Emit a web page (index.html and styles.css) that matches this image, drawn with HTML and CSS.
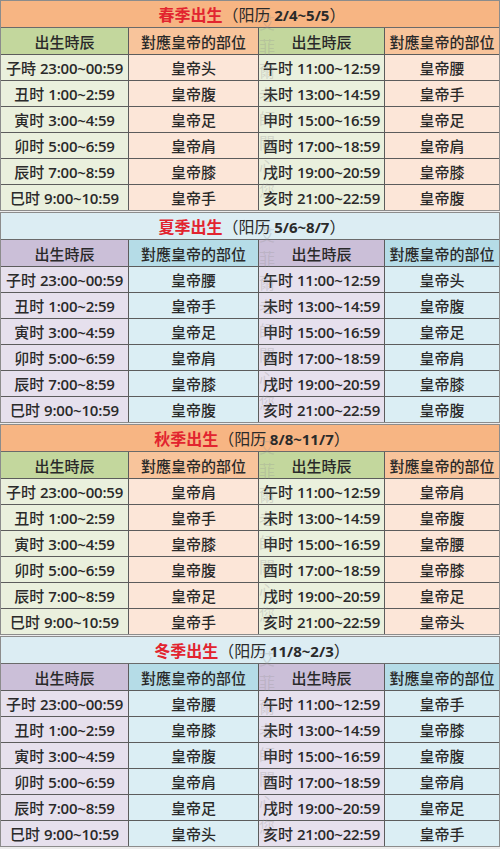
FILE: index.html
```html
<!DOCTYPE html>
<html lang="zh">
<head>
<meta charset="utf-8">
<link rel="stylesheet" href="styles.css">
</head>
<body>
<div class="page">

<section class="season warm">
  <div class="title"><span class="name">春季出生</span>（阳历 <b>2/4~5/5</b>）</div>
  <div class="grid">
    <div class="h1">出生時辰</div><div class="h2">對應皇帝的部位</div><div class="h1">出生時辰</div><div class="h2">對應皇帝的部位</div>
    <div class="c1">子時 <b>23:00~00:59</b></div><div class="c2">皇帝头</div><div class="c1">午时 <b>11:00~12:59</b></div><div class="c2">皇帝腰</div>
    <div class="c1">丑时 <b>1:00~2:59</b></div><div class="c2">皇帝腹</div><div class="c1">未时 <b>13:00~14:59</b></div><div class="c2">皇帝手</div>
    <div class="c1">寅时 <b>3:00~4:59</b></div><div class="c2">皇帝足</div><div class="c1">申时 <b>15:00~16:59</b></div><div class="c2">皇帝足</div>
    <div class="c1">卯时 <b>5:00~6:59</b></div><div class="c2">皇帝肩</div><div class="c1">酉时 <b>17:00~18:59</b></div><div class="c2">皇帝肩</div>
    <div class="c1">辰时 <b>7:00~8:59</b></div><div class="c2">皇帝膝</div><div class="c1">戌时 <b>19:00~20:59</b></div><div class="c2">皇帝膝</div>
    <div class="c1">巳时 <b>9:00~10:59</b></div><div class="c2">皇帝手</div><div class="c1">亥时 <b>21:00~22:59</b></div><div class="c2">皇帝腹</div>
  </div>
  <div class="mark">艾菲爾老師關心您</div>
</section>

<section class="season cool">
  <div class="title"><span class="name">夏季出生</span>（阳历 <b>5/6~8/7</b>）</div>
  <div class="grid">
    <div class="h1">出生時辰</div><div class="h2">對應皇帝的部位</div><div class="h1">出生時辰</div><div class="h2">對應皇帝的部位</div>
    <div class="c1">子时 <b>23:00~00:59</b></div><div class="c2">皇帝腰</div><div class="c1">午时 <b>11:00~12:59</b></div><div class="c2">皇帝头</div>
    <div class="c1">丑时 <b>1:00~2:59</b></div><div class="c2">皇帝手</div><div class="c1">未时 <b>13:00~14:59</b></div><div class="c2">皇帝腹</div>
    <div class="c1">寅时 <b>3:00~4:59</b></div><div class="c2">皇帝足</div><div class="c1">申时 <b>15:00~16:59</b></div><div class="c2">皇帝足</div>
    <div class="c1">卯时 <b>5:00~6:59</b></div><div class="c2">皇帝肩</div><div class="c1">酉时 <b>17:00~18:59</b></div><div class="c2">皇帝肩</div>
    <div class="c1">辰时 <b>7:00~8:59</b></div><div class="c2">皇帝膝</div><div class="c1">戌时 <b>19:00~20:59</b></div><div class="c2">皇帝膝</div>
    <div class="c1">巳时 <b>9:00~10:59</b></div><div class="c2">皇帝腹</div><div class="c1">亥时 <b>21:00~22:59</b></div><div class="c2">皇帝腹</div>
  </div>
  <div class="mark">艾菲爾老師關心您</div>
</section>

<section class="season warm">
  <div class="title"><span class="name">秋季出生</span>（阳历 <b>8/8~11/7</b>）</div>
  <div class="grid">
    <div class="h1">出生時辰</div><div class="h2">對應皇帝的部位</div><div class="h1">出生時辰</div><div class="h2">對應皇帝的部位</div>
    <div class="c1">子时 <b>23:00~00:59</b></div><div class="c2">皇帝肩</div><div class="c1">午时 <b>11:00~12:59</b></div><div class="c2">皇帝肩</div>
    <div class="c1">丑时 <b>1:00~2:59</b></div><div class="c2">皇帝手</div><div class="c1">未时 <b>13:00~14:59</b></div><div class="c2">皇帝腹</div>
    <div class="c1">寅时 <b>3:00~4:59</b></div><div class="c2">皇帝膝</div><div class="c1">申时 <b>15:00~16:59</b></div><div class="c2">皇帝腰</div>
    <div class="c1">卯时 <b>5:00~6:59</b></div><div class="c2">皇帝腹</div><div class="c1">酉时 <b>17:00~18:59</b></div><div class="c2">皇帝膝</div>
    <div class="c1">辰时 <b>7:00~8:59</b></div><div class="c2">皇帝足</div><div class="c1">戌时 <b>19:00~20:59</b></div><div class="c2">皇帝足</div>
    <div class="c1">巳时 <b>9:00~10:59</b></div><div class="c2">皇帝手</div><div class="c1">亥时 <b>21:00~22:59</b></div><div class="c2">皇帝头</div>
  </div>
  <div class="mark">艾菲爾老師關心您</div>
</section>

<section class="season cool">
  <div class="title"><span class="name">冬季出生</span>（阳历 <b>11/8~2/3</b>）</div>
  <div class="grid">
    <div class="h1">出生時辰</div><div class="h2">對應皇帝的部位</div><div class="h1">出生時辰</div><div class="h2">對應皇帝的部位</div>
    <div class="c1">子时 <b>23:00~00:59</b></div><div class="c2">皇帝腰</div><div class="c1">午时 <b>11:00~12:59</b></div><div class="c2">皇帝手</div>
    <div class="c1">丑时 <b>1:00~2:59</b></div><div class="c2">皇帝膝</div><div class="c1">未时 <b>13:00~14:59</b></div><div class="c2">皇帝膝</div>
    <div class="c1">寅时 <b>3:00~4:59</b></div><div class="c2">皇帝腹</div><div class="c1">申时 <b>15:00~16:59</b></div><div class="c2">皇帝腹</div>
    <div class="c1">卯时 <b>5:00~6:59</b></div><div class="c2">皇帝肩</div><div class="c1">酉时 <b>17:00~18:59</b></div><div class="c2">皇帝肩</div>
    <div class="c1">辰时 <b>7:00~8:59</b></div><div class="c2">皇帝足</div><div class="c1">戌时 <b>19:00~20:59</b></div><div class="c2">皇帝足</div>
    <div class="c1">巳时 <b>9:00~10:59</b></div><div class="c2">皇帝头</div><div class="c1">亥时 <b>21:00~22:59</b></div><div class="c2">皇帝手</div>
  </div>
  <div class="mark">艾菲爾老師關心您</div>
</section>

</div>
</body>
</html>
```

FILE: styles.css
```css
html, body {
  margin: 0;
  padding: 0;
  background: #ececec;
}
.page {
  width: 500px;
  font-family: "Noto Sans CJK SC", "Noto Sans", sans-serif;
  color: #2a2a2a;
}
.season {
  position: relative;
  border: 1px solid #8c8c8c;
  margin-bottom: 1px;
  overflow: hidden;
}
.title {
  height: 26px;
  line-height: 26px;
  text-align: center;
  font-size: 16px;
  border-bottom: 1px solid #6a6a6a;
  padding-left: 4px;
}
.title .name {
  color: #e2242f;
  font-weight: bold;
}
.title b {
  font-family: "Open Sans", sans-serif;
  font-weight: bold;
  font-size: 15px;
}
.grid {
  display: grid;
  grid-template-columns: 127px 129px 125px 1fr;
  grid-template-rows: 26px repeat(6, 25px);
  gap: 1px;
  background: #5c5c5c;
}
.grid > div {
  display: flex;
  align-items: center;
  justify-content: center;
  font-size: 15px;
  font-weight: 500;
  white-space: nowrap;
}
.grid > div b {
  font-family: "Open Sans", sans-serif;
  font-weight: 600;
  font-size: 15px;
  margin-left: 4px;
  letter-spacing: -0.2px;
}

.warm .title { background: #f7b583; }
.warm .h1 { background: #c3d79d; }
.warm .h2 { background: #f8c49b; }
.warm .c1 { background: #eaf0dd; }
.warm .c2 { background: #fce6d8; }

.cool .title { background: #dcedf3; }
.cool .h1 { background: #cbbfd8; }
.cool .h2 { background: #b5dce7; }
.cool .c1 { background: #e6e0ed; }
.cool .c2 { background: #dbeef4; }

.mark {
  position: absolute;
  left: 254px;
  top: 14px;
  writing-mode: vertical-rl;
  font-size: 16px;
  letter-spacing: 8px;
  color: rgba(150, 150, 150, 0.3);
  pointer-events: none;
}
```
